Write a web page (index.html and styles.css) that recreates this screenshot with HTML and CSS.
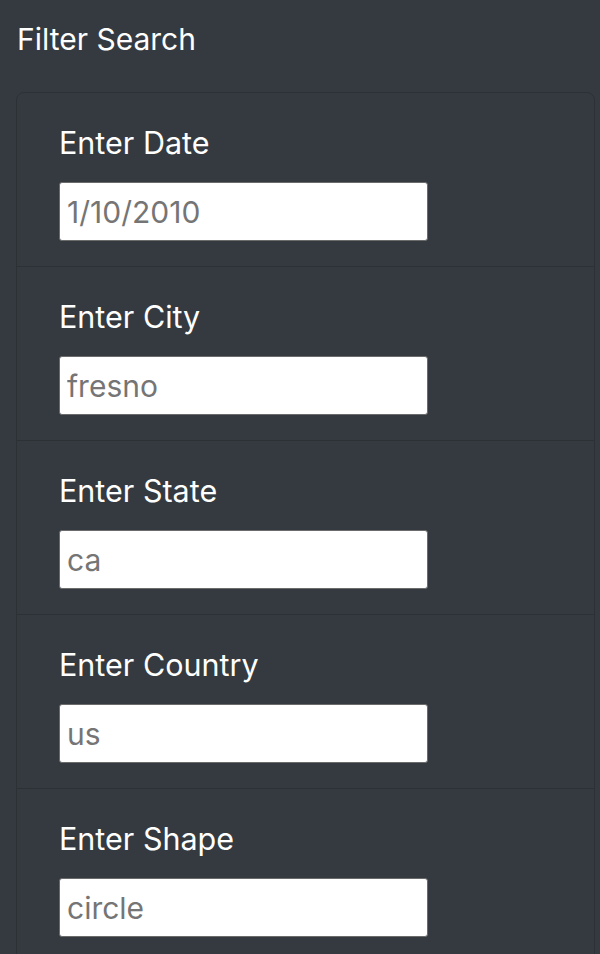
FILE: index.html
```html
<!DOCTYPE html>
<html>
<head>
<meta charset="utf-8">
<link rel="stylesheet" href="styles.css">
</head>
<body>
<h2 class="title">Filter Search</h2>
<ul class="card">
  <li class="item"><label class="lbl" for="d">Enter Date</label><input class="field" id="d" type="text" placeholder="1/10/2010"></li>
  <li class="item"><label class="lbl" for="c">Enter City</label><input class="field" id="c" type="text" placeholder="fresno"></li>
  <li class="item"><label class="lbl" for="s">Enter State</label><input class="field" id="s" type="text" placeholder="ca"></li>
  <li class="item"><label class="lbl" for="co">Enter Country</label><input class="field" id="co" type="text" placeholder="us"></li>
  <li class="item"><label class="lbl" for="sh">Enter Shape</label><input class="field" id="sh" type="text" placeholder="circle"></li>
</ul>
</body>
</html>
```
FILE: styles.css
```css
html, body {
  margin: 0;
  padding: 0;
  background: #343a40;
  color: #ffffff;
  font-family: Inter, "Noto Sans", sans-serif;
  height: 954px;
  overflow: hidden;
}
.title {
  margin: 0;
  padding: 23px 0 0 17px;
  font-size: 30px;
  font-weight: 400;
  line-height: 33px;
  height: 36px;
}
.card {
  list-style: none;
  margin: 33px 5px 0 16px;
  padding: 0;
  border: 1px solid rgba(0,0,0,0.15);
  border-radius: 8px;
}
.item {
  padding: 29px 0 25px 42px;
  border-bottom: 1px solid rgba(0,0,0,0.15);
  display: flex;
  flex-direction: column;
  align-items: flex-start;
}
.lbl {
  font-size: 30.5px;
  line-height: 42px;
  margin-bottom: 18px;
}
.field {
  box-sizing: border-box;
  width: 369px;
  height: 59px;
  margin: 0;
  border: 1px solid #6b6b6b;
  border-radius: 3px;
  padding: 0 7px;
  font-family: Inter, "Noto Sans", sans-serif;
  font-size: 30px;
  color: #333;
  background: #fff;
  outline: none;
}
.field::placeholder {
  color: #757575;
  opacity: 1;
}
```
